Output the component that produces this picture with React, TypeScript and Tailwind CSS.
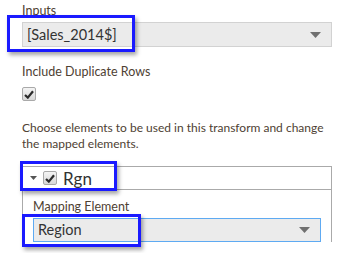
import { useState } from 'react';

const font = { fontFamily: 'Lato, "Open Sans", sans-serif' };

// Grey square checkbox with a dark tick, as the old form renders it
const Tick = ({ checked }: { checked: boolean }) => (
  <span className="flex h-[14px] w-[14px] items-center justify-center rounded-[2px] border border-[#a9a9a9] bg-gradient-to-b from-[#f4f4f4] to-[#d8d8d8]">
    {checked && (
      <svg width="10" height="9" viewBox="0 0 10 9">
        <path d="M1 5 L3.8 7.6 L9 1.2" stroke="#2b2b2b" strokeWidth="2.2" fill="none" />
      </svg>
    )}
  </span>
);

const Caret = () => (
  <svg width="11" height="6" viewBox="0 0 11 6">
    <path d="M0 0 H11 L5.5 6 Z" fill="#707070" />
  </svg>
);

// Blue annotation frame drawn over the screenshot
const Mark = ({ className }: { className: string }) => (
  <div className={`pointer-events-none absolute border-[3px] border-[#1a1aff] shadow-[2px_3px_4px_rgba(0,0,0,0.35)] ${className}`} />
);

export default function App() {
  const [dupes, setDupes] = useState(true);
  const [rgn, setRgn] = useState(true);

  return (
    <div className="relative h-[253px] w-[345px] overflow-hidden bg-white text-[#4e4133]" style={font}>
      <div className="pl-[22px] pr-[13px] pt-[2px]">
        <div className="text-[12.5px] leading-[17px]">Inputs</div>
        <div className="mt-[3px] flex h-[25px] items-center justify-between border border-[#d2d2d2] bg-[#ebebeb] pl-[4px] pr-[10px]">
          <span className="text-[14.5px] text-[#333]">[Sales_2014$]</span>
          <Caret />
        </div>

        <div className="mt-[16px] text-[12.5px] leading-[17px]">Include Duplicate Rows</div>
        <button className="mt-[7px] block" onClick={() => setDupes(!dupes)}>
          <Tick checked={dupes} />
        </button>

        <p className="mt-[19px] text-[12px] leading-[16px]">
          Choose elements to be used in this transform and change the mapped elements.
        </p>

        <div className="mt-[14px] border border-[#aaaaaa] border-b-0">
          <div className="flex h-[23px] items-center gap-[6px] border-b border-[#aaaaaa] pl-[7px]">
            <svg width="7" height="4" viewBox="0 0 7 4">
              <path d="M0 0 H7 L3.5 4 Z" fill="#555" />
            </svg>
            <button onClick={() => setRgn(!rgn)}>
              <Tick checked={rgn} />
            </button>
            <span className="text-[17px] leading-none text-[#333]">Rgn</span>
          </div>
          <div className="pl-[10px] pr-[10px] pt-[8px]">
            <div className="text-[12.5px] leading-[17px]">Mapping Element</div>
            <div className="mt-[3px] flex h-[24px] items-center justify-between border border-[#5eaaf2] bg-[#ebebeb] pl-[4px] pr-[10px]">
              <span className="text-[14.5px] text-[#333]">Region</span>
              <Caret />
            </div>
          </div>
        </div>
      </div>

      <Mark className="left-[7px] top-[15px] h-[37px] w-[128px]" />
      <Mark className="left-[20px] top-[161px] h-[30px] w-[97px]" />
      <Mark className="left-[22px] top-[214px] h-[33px] w-[119px]" />
    </div>
  );
}
